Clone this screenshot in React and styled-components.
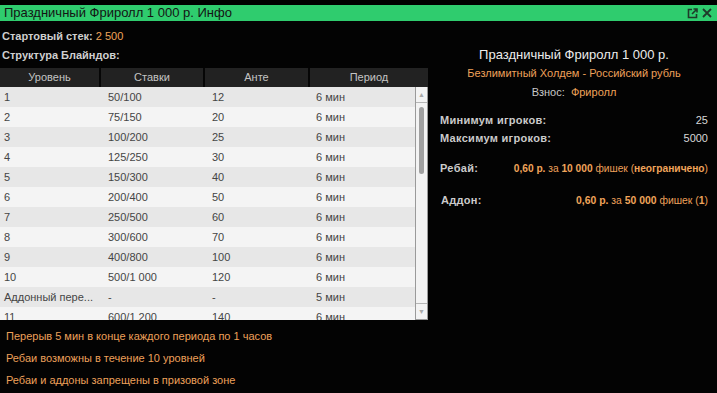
import React from "react";
import styled, { createGlobalStyle } from "styled-components";

const GlobalStyle = createGlobalStyle`
  html, body {
    margin: 0;
    padding: 0;
    background: #000;
  }
  body {
    font-family: "Liberation Sans", Arial, sans-serif;
    overflow: hidden;
  }
`;

const Window = styled.div`
  width: 717px;
  height: 393px;
  background: #030303;
  display: flex;
  flex-direction: column;
  overflow: hidden;
`;

const TopStrip = styled.div`
  height: 5px;
  background: #000;
`;

const TitleBar = styled.div`
  height: 16px;
  background: #2fcc6e;
  display: flex;
  align-items: center;
  justify-content: space-between;
  padding: 0 4px;
`;

const Title = styled.span`
  font-size: 13px;
  color: #141414;
  line-height: 16px;
`;

const TitleIcons = styled.div`
  display: flex;
  align-items: center;
  gap: 4px;
  margin-right: 1px;
`;

const Body = styled.div`
  flex: 1;
  display: flex;
`;

const LeftCol = styled.div`
  width: 428px;
  display: flex;
  flex-direction: column;
  padding-top: 6px;
`;

const InfoLine = styled.div`
  height: 19px;
  line-height: 19px;
  padding-left: 2px;
  font-size: 11px;
  font-weight: bold;
  color: #cfcfcf;
`;

const Orange = styled.span`
  color: #f0a45a;
  font-weight: ${(p) => (p.$bold ? "bold" : "normal")};
`;

const Table = styled.div`
  margin-top: 3px;
  display: flex;
  flex-direction: column;
`;

const HeaderRow = styled.div`
  display: grid;
  grid-template-columns: 101px 104px 105px 118px;
  height: 19px;
`;

const HeaderCell = styled.div`
  background: #222;
  color: #c4c4c4;
  font-size: 11px;
  line-height: 19px;
  text-align: center;
  border-right: ${(p) => (p.$last ? "none" : "2px solid #060606")};
`;

const BodyWrap = styled.div`
  height: 233px;
  display: flex;
  overflow: hidden;
`;

const Rows = styled.div`
  width: 415px;
  display: flex;
  flex-direction: column;
`;

const Row = styled.div`
  display: grid;
  grid-template-columns: 104px 104px 104px 103px;
  height: 20px;
  flex-shrink: 0;
  background: ${(p) => (p.$odd ? "#e7e7e7" : "#f4f4f4")};
  color: #454545;
  font-size: 11px;
  line-height: 20px;
`;

const Cell = styled.div`
  padding-left: 4px;
  white-space: nowrap;
  overflow: hidden;
`;

const Scrollbar = styled.div`
  width: 12px;
  background: #f3f3f3;
  border: 1px solid #9a9a9a;
  border-top: none;
  display: flex;
  flex-direction: column;
  align-items: center;
`;

const ScrollBtn = styled.div`
  width: 100%;
  height: 15px;
  display: flex;
  align-items: center;
  justify-content: center;
  border-bottom: ${(p) => (p.$top ? "1px solid #b5b5b5" : "none")};
  border-top: ${(p) => (p.$top ? "none" : "1px solid #b5b5b5")};
  color: #aaa;
  font-size: 7px;
`;

const Track = styled.div`
  flex: 1;
  width: 100%;
  display: flex;
  justify-content: center;
  padding-top: 4px;
`;

const Thumb = styled.div`
  width: 5px;
  height: 67px;
  background: #a0a0a0;
  border-radius: 3px;
`;

const Notes = styled.div`
  padding-top: 5px;
  display: flex;
  flex-direction: column;
`;

const Note = styled.div`
  height: 22px;
  line-height: 22px;
  padding-left: 6px;
  font-size: 11px;
  color: #eda05a;
`;

const RightCol = styled.div`
  flex: 1;
  padding: 24px 9px 0 12px;
  display: flex;
  flex-direction: column;
`;

const Centered = styled.div`
  height: 19px;
  line-height: 19px;
  text-align: center;
  font-size: ${(p) => p.$size || 11}px;
  color: ${(p) => p.$color || "#d0d0d0"};
`;

const Grey = styled.span`
  color: #c8c8c8;
`;

const StatRow = styled.div`
  display: flex;
  justify-content: space-between;
  align-items: baseline;
  height: 18px;
  line-height: 18px;
  font-size: 11px;
  margin-top: ${(p) => p.$gap || 0}px;
`;

const Label = styled.span`
  font-weight: bold;
  color: #cbcbcb;
  letter-spacing: 0.3px;
  padding-left: ${(p) => p.$indent || 0}px;
`;

const Value = styled.span`
  color: ${(p) => p.$color || "#d8d8d8"};
  font-size: ${(p) => p.$size || 11}px;
`;

const blinds = [
  ["1", "50/100", "12", "6 мин"],
  ["2", "75/150", "20", "6 мин"],
  ["3", "100/200", "25", "6 мин"],
  ["4", "125/250", "30", "6 мин"],
  ["5", "150/300", "40", "6 мин"],
  ["6", "200/400", "50", "6 мин"],
  ["7", "250/500", "60", "6 мин"],
  ["8", "300/600", "70", "6 мин"],
  ["9", "400/800", "100", "6 мин"],
  ["10", "500/1 000", "120", "6 мин"],
  ["Аддонный пере...", "-", "-", "5 мин"],
  ["11", "600/1 200", "140", "6 мин"],
];

const PopoutIcon = () => (
  <svg width="11" height="11" viewBox="0 0 11 11" fill="none" stroke="#1f3a2a" strokeWidth="1.6">
    <path d="M5 1.5H1.5v8h8V6" />
    <path d="M5 6l5-5M6.5 1h3.5v3.5" />
  </svg>
);

const CloseIcon = () => (
  <svg width="10" height="10" viewBox="0 0 10 10" stroke="#1f3a2a" strokeWidth="1.8">
    <path d="M1 1l8 8M9 1l-8 8" />
  </svg>
);

const App = () => {
  return (
    <>
      <GlobalStyle />
      <Window>
        <TopStrip />
        <TitleBar>
          <Title>Праздничный Фриролл 1 000 р. Инфо</Title>
          <TitleIcons>
            <PopoutIcon />
            <CloseIcon />
          </TitleIcons>
        </TitleBar>
        <Body>
          <LeftCol>
            <InfoLine>
              Стартовый стек: <Orange>2 500</Orange>
            </InfoLine>
            <InfoLine>Структура Блайндов:</InfoLine>
            <Table>
              <HeaderRow>
                <HeaderCell>Уровень</HeaderCell>
                <HeaderCell>Ставки</HeaderCell>
                <HeaderCell>Анте</HeaderCell>
                <HeaderCell $last>Период</HeaderCell>
              </HeaderRow>
              <BodyWrap>
                <Rows>
                  {blinds.map((r, i) => (
                    <Row key={i} $odd={i % 2 === 0}>
                      {r.map((c, j) => (
                        <Cell key={j}>{c}</Cell>
                      ))}
                    </Row>
                  ))}
                </Rows>
                <Scrollbar>
                  <ScrollBtn $top>▲</ScrollBtn>
                  <Track>
                    <Thumb />
                  </Track>
                  <ScrollBtn>▼</ScrollBtn>
                </Scrollbar>
              </BodyWrap>
            </Table>
            <Notes>
              <Note>Перерыв 5 мин в конце каждого периода по 1 часов</Note>
              <Note>Ребаи возможны в течение 10 уровней</Note>
              <Note>Ребаи и аддоны запрещены в призовой зоне</Note>
            </Notes>
          </LeftCol>
          <RightCol>
            <Centered $size={13} $color="#ececec">
              Праздничный Фриролл 1 000 р.
            </Centered>
            <Centered $color="#eda05a">Безлимитный Холдем - Российский рубль</Centered>
            <Centered>
              <Grey>Взнос:</Grey>&nbsp; <Orange>Фриролл</Orange>
            </Centered>
            <StatRow $gap={9}>
              <Label>Минимум игроков:</Label>
              <Value>25</Value>
            </StatRow>
            <StatRow>
              <Label>Максимум игроков:</Label>
              <Value>5000</Value>
            </StatRow>
            <StatRow $gap={12}>
              <Label>Ребай:</Label>
              <Value $color="#eda05a" $size={10.2}>
                <Orange $bold>0,60 р.</Orange> за <Orange $bold>10 000</Orange> фишек (
                <Orange $bold>неограничено</Orange>)
              </Value>
            </StatRow>
            <StatRow $gap={14}>
              <Label $indent={1}>Аддон:</Label>
              <Value $color="#eda05a" $size={10.4}>
                <Orange $bold>0,60 р.</Orange> за <Orange $bold>50 000</Orange> фишек (
                <Orange $bold>1</Orange>)
              </Value>
            </StatRow>
          </RightCol>
        </Body>
      </Window>
    </>
  );
};

export default App;
